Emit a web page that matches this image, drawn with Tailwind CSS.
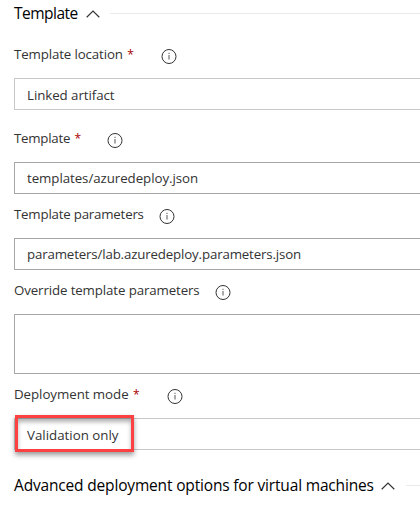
<!DOCTYPE html>
<html lang="en">
<head>
<meta charset="utf-8">
<title>Template</title>
<script src="https://cdn.jsdelivr.net/npm/@tailwindcss/browser@4"></script>
</head>
<body class="bg-white overflow-hidden font-['Open_Sans','Noto_Sans',sans-serif] text-[13.3px] text-[#333]">
<svg class="hidden">
  <symbol id="info" viewBox="0 0 16 16"><circle cx="8" cy="8.500" r="7" fill="none" stroke="#333" stroke-width="1"/><path d="M8 7v4.500M8 4.800v1.200" stroke="#555" stroke-width="1" fill="none"/></symbol>
  <symbol id="chevron" viewBox="0 0 14 8"><path d="M.7 7.2 7 1l6.300 6.200" fill="none" stroke="#333" stroke-width="1.2"/></symbol>
</svg>
<main class="w-[420px] h-[512px] pl-[14px] flex flex-col overflow-hidden">
  <header class="h-[27px] flex items-center shrink-0">
    <h2 class="w-[72px] text-[15.5px] tracking-[-0.5px] text-black whitespace-nowrap">Template</h2>
    <svg class="w-[14px] h-2 mt-px"><use href="#chevron"/></svg>
    <div class="h-px bg-[#eaeaea] grow ml-[10px]"></div>
  </header>
  <div class="h-[51px] pt-[17px] flex items-start shrink-0">
    <label class="w-[147px] leading-5 tracking-[-0.13px] whitespace-nowrap">Template location <span class="text-[#a80000] text-[12px] ml-px">*</span></label>
    <svg class="size-4 mt-[4px]"><use href="#info"/></svg>
  </div>
  <div class="h-8 border border-r-0 border-[#c8c8c8] pl-3 flex items-center shrink-0 pt-[3px] tracking-[-0.06px]">Linked artifact</div>
  <div class="h-[52px] pt-[18px] flex items-start shrink-0">
    <label class="w-[93px] leading-5 tracking-[-0.25px] whitespace-nowrap">Template <span class="text-[#a80000] text-[12px] ml-px">*</span></label>
    <svg class="size-4 mt-[4px]"><use href="#info"/></svg>
  </div>
  <div class="h-8 border border-r-0 border-[#a6a6a6] pl-3 flex items-center shrink-0 pt-[2px] tracking-[-0.06px]">templates/azuredeploy.json</div>
  <div class="h-[44px] pt-[10px] flex items-start shrink-0">
    <label class="w-[145px] leading-5 tracking-[-0.21px] whitespace-nowrap">Template parameters</label>
    <svg class="size-4 mt-[4px]"><use href="#info"/></svg>
  </div>
  <div class="h-8 border border-r-0 border-[#a6a6a6] pl-3 flex items-center shrink-0 pt-[2px] tracking-[-0.16px]">parameters/lab.azuredeploy.parameters.json</div>
  <div class="h-[44px] pt-[10px] flex items-start shrink-0">
    <label class="w-[201px] leading-5 tracking-[-0.12px] whitespace-nowrap">Override template parameters</label>
    <svg class="size-4 mt-[4px]"><use href="#info"/></svg>
  </div>
  <div class="h-[60px] border border-r-0 border-[#a6a6a6] shrink-0"></div>
  <div class="h-[44px] pt-[10px] flex items-start shrink-0">
    <label class="w-[153px] leading-5 tracking-[-0.05px] whitespace-nowrap">Deployment mode <span class="text-[#a80000] text-[12px] ml-px">*</span></label>
    <svg class="size-4 mt-[4px]"><use href="#info"/></svg>
  </div>
  <div class="relative h-8 border border-r-0 border-[#c8c8c8] pl-3 flex items-center shrink-0 pt-[3px]">Validation only
    <div class="absolute left-0 -top-[4px] w-[119px] h-[37px] border-3 border-[#fb4141] shadow-[0_3px_5px_rgba(0,0,0,.4),inset_0_4px_4px_rgba(0,0,0,.3)]"></div>
  </div>
  <header class="h-[71px] flex items-center shrink-0">
    <h2 class="w-[367px] text-[15.5px] tracking-[-0.17px] text-black whitespace-nowrap">Advanced deployment options for virtual machines</h2>
    <svg class="w-[14px] h-2 mt-px"><use href="#chevron"/></svg>
    <div class="h-px bg-[#eaeaea] grow ml-[11px]"></div>
  </header>
</main>
</body>
</html>
